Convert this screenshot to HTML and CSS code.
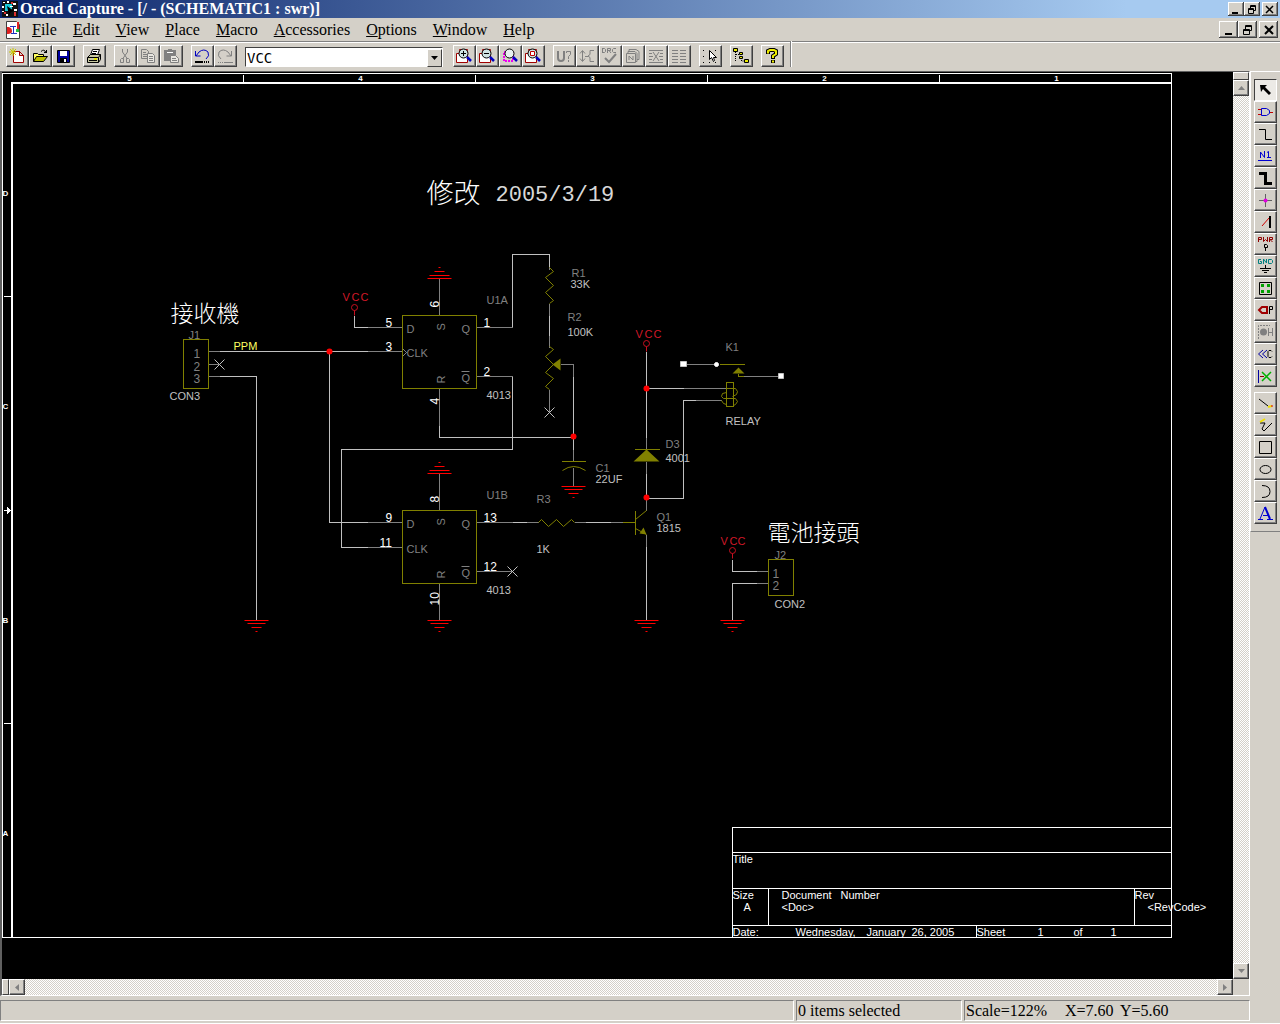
FILE: index.html
```html
<!DOCTYPE html>
<html lang="en">
<head>
<meta charset="utf-8">
<title>Orcad Capture</title>
<link rel="stylesheet" href="styles.css">
</head>
<body>
<div class="app">
  <header class="titlebar">
    <svg class="app-icon" width="16" height="16" viewBox="0 0 16 16"><path fill="#111" d="M0 0h16v16H0z"/><path fill="#18c8d8" d="M3 3h7v7H3z"/><path fill="#fff" d="M1 1h2v1H1zM5 0h2v2H5zM0 5h2v2H0zM0 10h2v1H0zM4 13h2v2H4zM11 2h3v2h-3zM8 5h3v1H8zM12 8h3v2h-3z"/><path fill="#e03030" d="M9 1h2v2H9zM2 11h2v2H2zM12 11h2v4h-2z"/><path d="M5 5l7 5-3 1-2 3z"/></svg>
    <h1>Orcad Capture - [/ - (SCHEMATIC1 : swr)]</h1>
    <div class="winbtns">
      <button class="win" aria-label="Minimize"><svg width="10" height="9" viewBox="0 0 10 9"><path fill="#000" d="M1 7h6v2H1z"/></svg></button>
      <button class="win" aria-label="Restore"><svg width="10" height="9" viewBox="0 0 10 9"><path fill="none" stroke="#000" d="M3.500 3V.500h5v5H7M3 1.500h6M1.500 3.500h5v5h-5zM1 4.500h6"/></svg></button>
      <button class="win close" aria-label="Close"><svg width="10" height="9" viewBox="0 0 10 9"><path stroke="#000" stroke-width="1.500" d="M1 1l7 7M8 1l-7 7"/></svg></button>
    </div>
  </header>

  <nav class="menubar">
    <svg class="doc-icon" width="15" height="18" viewBox="0 0 15 18"><path fill="#fff" stroke="#404040" d="M.500.500h10l3 3v14H.500z"/><path fill="#e02020" d="M1 6c4 0 5 2 5 4s-1 3-5 3zM11 1h2v7h-2z"/><path stroke="#2030c0" fill="none" d="M4 5.500h6M7.500 5v7M5 12.500h6"/><path fill="#20c040" d="M10 8h3v3h-3z"/></svg>
    <a href="#"><u>F</u>ile</a><a href="#"><u>E</u>dit</a><a href="#"><u>V</u>iew</a><a href="#"><u>P</u>lace</a><a href="#"><u>M</u>acro</a><a href="#"><u>A</u>ccessories</a><a href="#"><u>O</u>ptions</a><a href="#"><u>W</u>indow</a><a href="#"><u>H</u>elp</a>
    <div class="winbtns doc">
      <button class="win" aria-label="Minimize document"><svg width="10" height="10" viewBox="0 0 10 10"><path fill="#000" d="M1 8h7v2H1z"/></svg></button>
      <button class="win" aria-label="Restore document"><svg width="11" height="10" viewBox="0 0 11 10"><path fill="none" stroke="#000" d="M3.500 4V.500h6v5H8M3 1.500h7M1.500 4.500h6v5h-6zM1 5.500h7"/></svg></button>
      <button class="win close" aria-label="Close document"><svg width="10" height="10" viewBox="0 0 10 10"><path stroke="#000" stroke-width="2" d="M1 1l8 8M9 1l-8 8"/></svg></button>
    </div>
  </nav>

  <div class="toolbar">
    <div class="group">
      <button class="tb" aria-label="New"><svg viewBox="0 0 16 16"><path fill="#fff" stroke="#a00000" d="M4.500 3.500h6l4 4v7h-10zM10.500 3v4.500H15"/><path stroke="#c8c800" d="M1 1l6 6M7 1L1 7M4 0v8M0 4h7"/></svg></button>
      <button class="tb" aria-label="Open"><svg viewBox="0 0 16 16"><path fill="#ffff60" stroke="#000" d="M1.500 13.500v-8h4l1 1h5v2"/><path fill="#c0c000" stroke="#000" d="M1.500 13.500l3-5h11l-4 5z"/><path fill="none" stroke="#000" d="M9 3.500q3-3 5 1M12 4.500h3M14.500 2v3"/></svg></button>
      <button class="tb" aria-label="Save"><svg viewBox="0 0 16 16"><path fill="#0000a0" stroke="#000" d="M2.500 2.500h12v12h-12z"/><path fill="#fff" d="M5 3h7v5H5z"/><path fill="#000" d="M5 10h7v4H5z"/><path fill="#fff" d="M9 11h2v3H9z"/></svg></button>
    </div>
    <div class="group">
      <button class="tb" aria-label="Print"><svg viewBox="0 0 16 16"><path fill="#fff" stroke="#000" d="M4.500 7l2-5.500h7l-2 5.500"/><path stroke="#000" d="M7 3.500h4M6 5.500h4"/><path fill="#c8c8a0" stroke="#000" d="M1.500 9.500l3-3h10v5l-2 3h-11z"/><path fill="none" stroke="#000" d="M1.500 9.500h11v5M12.500 9.500l2-3M3 12.500h8"/><path fill="#e8e800" d="M8 10h3v2H8z"/></svg></button>
    </div>
    <div class="group">
      <button class="tb" aria-label="Cut" disabled><svg viewBox="0 0 16 16"><path class="dis" d="M5.500 1v3l5 7M10.500 1v3l-5 7M4.500 10.500h2v4h-3v-3zM9.500 10.500h2l1 1v3h-3z"/></svg></button>
      <button class="tb" aria-label="Copy" disabled><svg viewBox="0 0 16 16"><path class="dis" d="M1.500 1.500h5l2 2v7h-7zM3 4.500h3M3 6.500h4M3 8.500h4"/><path class="dis sheetfill" d="M7.500 5.500h5l2 2v7h-7zM9 8.500h4M9 10.500h4M9 12.500h4"/></svg></button>
      <button class="tb" aria-label="Paste" disabled><svg viewBox="0 0 16 16"><path fill="#808080" d="M1 2h4V1h4v1h4v11H1z"/><path stroke="#fff" d="M4 4.500h6"/><path class="dis sheetfill" d="M7.500 7.500h5l3 3v4h-8zM9 10.500h4M9 12.500h5"/></svg></button>
    </div>
    <div class="group">
      <button class="tb" aria-label="Undo"><svg viewBox="0 0 16 16"><path fill="none" stroke="#0000c0" d="M1.500 3v5h5M2 8l3-4q5-4 9 0 2 4-2 7"/><path stroke="#000" stroke-width="2" d="M1 14h8"/><path stroke="#000" stroke-dasharray="1 1" stroke-width="2" d="M10 14h6"/></svg></button>
      <button class="tb" aria-label="Redo" disabled><svg viewBox="0 0 16 16"><path class="dis" d="M14.500 3v5h-5M14 8l-3-4q-5-4-9 0-2 4 2 7"/><path stroke="#808080" stroke-dasharray="1 1" d="M1 14.500h7"/><path stroke="#808080" d="M8 14.500h8"/></svg></button>
    </div>
    <div class="combo">
      <select aria-label="Part"><option>VCC</option></select>
      <span class="drop"><svg width="7" height="4" viewBox="0 0 7 4"><path d="M0 0h7L3.500 4z"/></svg></span>
    </div>
    <div class="group">
      <button class="tb" aria-label="Zoom in"><svg viewBox="0 0 16 16"><path fill="#fff" stroke="#a00000" d="M.500 14.500v-9h3v-4h8v13z"/><circle cx="7.500" cy="5.500" r="4.500" fill="#cfe4e4" stroke="#000"/><path stroke="#000" d="M5 5.500h5M7.500 3v5"/><path stroke="#0000c0" stroke-width="2.500" d="M11 9l4 4"/></svg></button>
      <button class="tb" aria-label="Zoom out"><svg viewBox="0 0 16 16"><path fill="#fff" stroke="#a00000" d="M.500 14.500v-9h3v-4h8v13z"/><circle cx="7.500" cy="5.500" r="4.500" fill="#cfe4e4" stroke="#000"/><path stroke="#000" d="M5 5.500h5"/><path stroke="#0000c0" stroke-width="2.500" d="M11 9l4 4"/></svg></button>
      <button class="tb" aria-label="Zoom to region"><svg viewBox="0 0 16 16"><path fill="none" stroke="#f000f0" stroke-width="2" stroke-dasharray="2 1" d="M2 4h9v9H2z"/><circle cx="7.500" cy="5.500" r="4.500" fill="#e8f0f0" stroke="#000"/><path stroke="#0000c0" stroke-width="2.500" d="M11 9l4 4"/></svg></button>
      <button class="tb" aria-label="Zoom to all"><svg viewBox="0 0 16 16"><path fill="#fff" stroke="#a00000" d="M.500 14.500v-9h3v-4h8v13z"/><circle cx="7.500" cy="5.500" r="4.500" fill="#cfe4e4" stroke="#000"/><path fill="#fff" stroke="#c00000" d="M5.500 3.500h4v4h-4z"/><path stroke="#0000c0" stroke-width="2.500" d="M11 9l4 4"/></svg></button>
    </div>
    <div class="group">
      <button class="tb" aria-label="Annotate" disabled><svg viewBox="0 0 16 16"><path class="dis" stroke-width="2" d="M2 3v7q0 3 3 3t3-3V3"/><path class="dis" d="M10.500 5V3.500h4v3l-2 2V11M12.500 12v2"/></svg></button>
      <button class="tb" aria-label="Back annotate" disabled><svg viewBox="0 0 16 16"><path class="dis" d="M3.500 3v10M1 5.500l2.500-3L6 5.500M1 10.500l2.500 3 2.500-3M15 2.500h-4v4l-2 1.500 2 1.500v4h4M6 8.500h3"/></svg></button>
      <button class="tb" aria-label="Design rules check" disabled><svg viewBox="0 0 16 16"><path class="dis" d="M.500 0v5M0 .500h2.500l1 1v2l-1 1H0M5.500 5V.500h3v2h-3M7 2.500l2 2.500M14 .500h-2.500l-1 1v2l1 1H14"/><path class="dis" stroke-width="2" d="M3 10l4 4 7-8"/></svg></button>
      <button class="tb" aria-label="Create netlist" disabled><svg viewBox="0 0 16 16"><path class="dis" d="M4 3V1.500h7l3 2v8h-2M3 5V3.500h7l2 2v8h-2M1.500 5.500h9v9h-9zM4 12V8l4 4V8"/></svg></button>
      <button class="tb" aria-label="Cross reference" disabled><svg viewBox="0 0 16 16"><path class="dis" d="M1 2.500h14M1 5.500h3M12 5.500h3M1 8.500h4M11 8.500h4M1 11.500h3M12 11.500h3M1 14.500h14M5 4l6 9M11 4l-6 9"/></svg></button>
      <button class="tb" aria-label="Bill of materials" disabled><svg viewBox="0 0 16 16"><path class="dis" d="M1 2.500h6M9 2.500h6M1 5.500h6M9 5.500h6M1 8.500h6M9 8.500h6M1 11.500h6M9 11.500h6M1 14.500h6M9 14.500h6"/></svg></button>
    </div>
    <div class="group">
      <button class="tb" aria-label="Snap to grid"><svg viewBox="0 0 16 16"><path d="M1 2h1v1H1zM1 8h1v1H1zM1 14h1v1H1zM7 14h1v1H7zM13 2h1v1h-1zM13 14h1v1h-1z"/><path fill="#fff" stroke="#000" d="M7.500 2.500v9l2-2 2 4 1-1-1-3h3z"/></svg></button>
    </div>
    <div class="group">
      <button class="tb" aria-label="Project manager"><svg viewBox="0 0 16 16"><path fill="none" stroke="#000" stroke-dasharray="1 1" d="M2.500 4v10M3 6.500h4M8.500 8v5H12"/><path fill="#e8e800" stroke="#000" d="M.500.500h4v3h-4zM6.500 4.500h3v2h-3zM6.500 8.500h3v2h-3zM11.500 11.500h4v3h-4z"/></svg></button>
    </div>
    <div class="group">
      <button class="tb" aria-label="Help"><svg viewBox="0 0 16 16"><path fill="none" stroke="#000" stroke-width="4" d="M4 6V3l2-1h4l2 1v3L9 8v3M9 12v3"/><path fill="none" stroke="#f0f000" stroke-width="2" d="M4 5.500V3l2-1h4l2 1v3L9 8v2M9 12.500v2"/></svg></button>
    </div>
    <span class="tb-end"></span>
  </div>

  <div class="work">
    <main class="mdi">
      <div class="canvas">
        <svg class="sheet" width="1231" height="907" viewBox="1.500 71.500 1231 907">
          <defs>
            <g id="gnd"><path stroke="#f00" d="M-12 0h24M-9 3h18M-5 7h10M-1 11h2"/></g>
            <g id="gndup"><path stroke="#f00" d="M-12 0h24M-10-3h20M-5-7h10M-1-11h2"/></g>
            <g id="pwr"><circle cx="0" cy="-8" r="3"/><path d="M0-5v5"/></g>
            <path id="nc" d="M-5-5l10 10M5-5l-10 10"/>
          </defs>

          <g class="frame">
            <path d="M2 73h1169v864H2zM243 74v8M475 74v8M707 74v8M939 74v8M3 296h8M3 723h8M3 510h8"/>
            <path stroke-width="2" d="M1171 82.500H11.500V937"/>
            <path class="arrow" d="M6 506l5 4-5 4z"/>
            <path d="M732 937V827h439M732 852h439M732 888h439M732 925h439M768 888v37M1134 888v37M976 925v12"/>
          </g>
          <g class="ruler">
            <text x="129" y="80">5</text><text x="360" y="80">4</text><text x="592" y="80">3</text><text x="824" y="80">2</text><text x="1056" y="80">1</text>
            <text x="5" y="195">D</text><text x="5" y="408">C</text><text x="5" y="622">B</text><text x="5" y="835">A</text>
          </g>
          <g class="block">
            <text x="732" y="862">Title</text><text x="732" y="898">Size</text><text x="743" y="910">A</text>
            <text x="781" y="898">Document <tspan x="840">Number</tspan></text><text x="781" y="910">&lt;Doc&gt;</text>
            <text x="1134" y="898">Rev</text><text x="1147" y="910">&lt;RevCode&gt;</text>
            <text x="732" y="935">Date:</text><text x="795" y="935">Wednesday, <tspan x="866">January </tspan><tspan x="911">26, 2005</tspan></text>
            <text x="976" y="935">Sheet</text><text x="1037" y="935">1</text><text x="1073" y="935">of</text><text x="1110" y="935">1</text>
          </g>

          <g class="wire">
            <path d="M219 351h148M219 376h37v244M329 351v171h38M354 315v12h13M512 327V254h37v12M439 425v12h134M512 376v73H341v98h26M573 376v73M549 315v20M512 522h14M585 522h25M646 351v86M646 388h37M646 473v25h37V400h12M646 546v74M732 559v12h24M756 583h-24v37"/>
          </g>
          <g class="pin">
            <path d="M208 351h11M208 364h11M208 376h11M367 351h35M367 327h35M367 522h35M367 547h35M476 327h36M476 376h36M439 278v37M439 388v37M476 522h36M476 571h36M439 473v37M439 583v37M560 364h13v12M573 449v12M573 467v19M526 522h12M574 522h11M610 522h12M646 437v12M646 461v12M646 498v12M646 534v12M683 388h43M695 400h26M686 364h28M743 376h34M756 571h12M756 583h12M549 266v3M549 303v12M549 335v12M549 389v23"/>
            <path d="M402 348l4 4-4 4"/>
          </g>
          <g class="cross"><use href="#nc" x="219" y="364"/><use href="#nc" x="549" y="412"/><use href="#nc" x="512" y="571"/></g>
          <g class="part">
            <path class="crisp" d="M183 339h25v49h-25zM402 315h74v73h-74zM402 510h74v73h-74zM768 559h25v36h-25zM726 382h7v24h-7zM561 461h24M634 449h25M635 510v24M622 522h13M719 364h25M738 373v3h5"/>
            <path d="M549 267l4 4-8 6 8 8-8 7 8 8-4 3M549 346l4 3-8 7 8 8-8 8 8 6-8 8 4 3M538 522l3-3 7 7 8-7 7 7 8-7 3 3M562 470q11-8 23 0M635 519l11-9M635 528l11 6"/>
            <path d="M726 388h9l2 3-1 3-4 2M733 398h-10l-2-2 1-3 4-1M733 398h2l2 3-2 3-2 1M726 404l-3-1-2-3"/>
            <path class="solid" d="M552 364l8-6v12zM646 449l13 12h-26zM738 367l6 6h-12zM643 527l3 7-7-1z"/>
          </g>
          <use href="#gndup" x="439" y="278"/><use href="#gndup" x="439" y="473"/>
          <use href="#gnd" x="256" y="620"/><use href="#gnd" x="439" y="620"/><use href="#gnd" x="573" y="486"/><use href="#gnd" x="646" y="620"/><use href="#gnd" x="732" y="620"/>
          <g class="power"><use href="#pwr" x="354" y="315"/><use href="#pwr" x="646" y="351"/><use href="#pwr" x="732" y="558"/></g>
          <g class="junction"><circle cx="329" cy="351" r="3"/><circle cx="573" cy="436" r="3"/><circle cx="646" cy="388" r="3"/><circle cx="646" cy="497" r="3"/></g>
          <g class="handle"><path d="M680 361h6v5h-6zM778 373h5v5h-5z"/><circle cx="716" cy="364" r="2"/></g>

          <g class="note">
            <text x="426" y="202" class="big">修改</text><text x="495" y="200" class="mono">2005/3/19</text>
            <text x="170" y="321">接收機</text><text x="767" y="540">電池接頭</text>
          </g>
          <g class="power-name"><text x="342" y="300">V<tspan x="351">C</tspan><tspan x="360">C</tspan></text><text x="635" y="337">V<tspan x="644">C</tspan><tspan x="653">C</tspan></text><text x="720" y="544">V<tspan x="729">C</tspan><tspan x="737">C</tspan></text></g>
          <text class="net" x="233" y="349">PPM</text>
          <g class="ref">
            <text x="188" y="338">J1</text><text x="486" y="303">U1A</text><text x="486" y="498">U1B</text><text x="571" y="276">R1</text><text x="567" y="320">R2</text><text x="595" y="471">C1</text><text x="536" y="502">R3</text><text x="656" y="520">Q1</text><text x="665" y="447">D3</text><text x="725" y="350">K1</text><text x="774" y="558">J2</text>
            <text x="406" y="332">D</text><text x="461" y="332">Q</text><text x="406" y="356">CLK</text><text x="461" y="381">Q</text>
            <text x="406" y="527">D</text><text x="461" y="527">Q</text><text x="406" y="552">CLK</text><text x="461" y="576">Q</text>
            <text transform="translate(444 330) rotate(-90)">S</text><text transform="translate(444 383) rotate(-90)">R</text>
            <text transform="translate(444 525) rotate(-90)">S</text><text transform="translate(444 578) rotate(-90)">R</text>
            <path d="M461 371h8M461 566h8"/>
          </g>
          <g class="ref num"><text x="193" y="357">1</text><text x="193" y="370">2</text><text x="193" y="382">3</text><text x="772" y="577">1</text><text x="772" y="589">2</text></g>
          <g class="value">
            <text x="169" y="399">CON3</text><text x="486" y="398">4013</text><text x="486" y="593">4013</text><text x="570" y="287">33K</text><text x="567" y="335">100K</text><text x="595" y="482">22UF</text><text x="536" y="552">1K</text><text x="656" y="531">1815</text><text x="665" y="461">4001</text><text x="725" y="424">RELAY</text><text x="774" y="607">CON2</text>
          </g>
          <g class="pinno">
            <text x="385" y="326">5</text><text x="385" y="350">3</text><text x="483" y="326">1</text><text x="483" y="375">2</text><text x="385" y="521">9</text><text x="379" y="546">11</text><text x="483" y="521">13</text><text x="483" y="570">12</text>
            <text transform="translate(438 307) rotate(-90)">6</text><text transform="translate(438 404) rotate(-90)">4</text><text transform="translate(438 502) rotate(-90)">8</text><text transform="translate(438 605) rotate(-90)">10</text>
          </g>
        </svg>
      </div>
      <div class="vscroll">
        <span class="split"></span>
        <button class="sb" aria-label="Scroll up"><svg width="7" height="4" viewBox="0 0 7 4"><path fill="#808080" d="M3.500 0L7 4H0z"/></svg></button>
        <span class="track"></span>
        <button class="sb" aria-label="Scroll down"><svg width="7" height="4" viewBox="0 0 7 4"><path fill="#808080" d="M0 0h7L3.500 4z"/></svg></button>
      </div>
      <div class="hscroll">
        <span class="split"></span>
        <button class="sb" aria-label="Scroll left"><svg width="4" height="7" viewBox="0 0 4 7"><path fill="#808080" d="M4 0v7L0 3.500z"/></svg></button>
        <span class="track"></span>
        <button class="sb" aria-label="Scroll right"><svg width="4" height="7" viewBox="0 0 4 7"><path fill="#808080" d="M0 0l4 3.500L0 7z"/></svg></button>
      </div>
      <span class="corner"></span>
    </main>
    <aside class="palette">
      <div class="tools">
        <button class="tb on" aria-label="Select"><svg viewBox="0 0 16 16"><path d="M3 3h7L8 5l6 6-2 2-6-6-2 3z"/></svg></button>
        <button class="tb" aria-label="Part"><svg viewBox="0 0 16 16"><path stroke="#c00000" d="M1 5.500h4M1 10.500h4M13 8.500h3"/><path fill="none" stroke="#0000d0" d="M4.500 4.500h5l3 2v3l-3 2h-5z"/></svg></button>
        <button class="tb" aria-label="Wire"><svg viewBox="0 0 16 16"><path fill="none" stroke="#000" d="M2 3.500h6.500v10H15"/></svg></button>
        <button class="tb" aria-label="Net alias"><svg viewBox="0 0 16 16"><path fill="none" stroke="#0000d0" d="M3.500 10V4l4 5.500V3M10 4.500l1.500-1V10M10 9.500h4"/><path stroke="#0000d0" d="M1 12.500h14"/></svg></button>
        <button class="tb" aria-label="Bus"><svg viewBox="0 0 16 16"><path fill="none" stroke="#000" stroke-width="3" d="M2 3.500h6.500v10H15"/></svg></button>
        <button class="tb" aria-label="Junction"><svg viewBox="0 0 16 16"><path stroke="#606060" d="M2 8.500h13M8.500 2v13"/><circle cx="8.500" cy="8.500" r="2" fill="#e000e0"/></svg></button>
        <button class="tb" aria-label="Bus entry"><svg viewBox="0 0 16 16"><path stroke="#d00000" d="M5 12l7-8"/><path stroke="#000" stroke-width="2" d="M13 2v12"/></svg></button>
        <button class="tb" aria-label="Power"><svg viewBox="0 0 16 16"><path fill="none" stroke="#900000" d="M1.500 6V1.500h3v2h-3M6.500 1v4.500l2-2 2 2V1M12.500 6V1.500h3v2h-3M13 3.500l2.500 2.500"/><path fill="none" stroke="#000" d="M7.500 8.500h2l1 1v2h-3zM8.500 12v3"/></svg></button>
        <button class="tb" aria-label="Ground"><svg viewBox="0 0 16 16"><path fill="none" stroke="#008080" d="M4 1.500H1.500v4h3v-2H3M6.500 6V1l3 4V1M11.500 1.500h3l1 1v2l-1 1h-3z"/><path stroke="#000" d="M8.500 7v3M3 10.500h11M5 12.500h7M7 14.500h3"/></svg></button>
        <button class="tb" aria-label="Hierarchical block"><svg viewBox="0 0 16 16"><path fill="none" stroke="#000" d="M2.500 2.500h12v12h-12z"/><path fill="#00a000" d="M4 4h3v3H4zM10 4h3v3h-3zM4 10h3v3H4zM10 10h3v3h-3z"/></svg></button>
        <button class="tb" aria-label="Port"><svg viewBox="0 0 16 16"><path fill="none" stroke="#a00000" stroke-width="2" d="M10 5H5L2 8l3 3h5z"/><path fill="none" stroke="#000" d="M12.500 12V4.500h3v3h-3"/></svg></button>
        <button class="tb" aria-label="Hierarchical pin" disabled><svg viewBox="0 0 16 16"><path class="dis" stroke-dasharray="2 1" d="M1.500 15V1.500H13"/><circle cx="6.500" cy="8" r="3.500" fill="#808080"/><path class="dis" d="M11.500 4v8M15.500 4v8M12 8.500h3"/></svg></button>
        <button class="tb" aria-label="Off-page connector"><svg viewBox="0 0 16 16"><path fill="none" stroke="#0000a0" d="M6 4L1.500 8 6 12M10 4L5.500 8l4.500 4"/><path fill="none" stroke="#000" d="M15 5.500l-1-1h-2l-1 1v5l1 1h2l1-1"/></svg></button>
        <button class="tb" aria-label="No connect"><svg viewBox="0 0 16 16"><path stroke="#0000a0" d="M1.500 2v13"/><path stroke="#900000" d="M3 8.500h4"/><path stroke="#00b000" stroke-width="1.500" d="M5 4l9 9M14 4l-9 9"/></svg></button>
      </div>
      <div class="tools">
        <button class="tb" aria-label="Line"><svg viewBox="0 0 16 16"><path stroke="#000" d="M2 4l9 7"/><path stroke="#f0e000" stroke-width="2" d="M11 12l4-1"/><path stroke="#e00000" d="M15 10v2"/></svg></button>
        <button class="tb" aria-label="Polyline"><svg viewBox="0 0 16 16"><path fill="none" stroke="#000" d="M3 6l5 0-3 6 2 2 8-8"/><path stroke="#f0e000" stroke-width="2" d="M3 5l5-3"/></svg></button>
        <button class="tb" aria-label="Rectangle"><svg viewBox="0 0 16 16"><path fill="none" stroke="#000" d="M2.500 2.500h12v12h-12z"/></svg></button>
        <button class="tb" aria-label="Ellipse"><svg viewBox="0 0 16 16"><ellipse cx="8.500" cy="8.500" rx="5.500" ry="4" fill="none" stroke="#000"/></svg></button>
        <button class="tb" aria-label="Arc"><svg viewBox="0 0 16 16"><path fill="none" stroke="#000" d="M5 2.500q8 0 8 6t-8 6"/></svg></button>
        <button class="tb" aria-label="Text"><svg viewBox="0 0 16 16"><path fill="none" stroke="#0000d0" d="M1 14.500h5M10 14.500h6M3 14L8 2M6 10.500h5"/><path stroke="#0000d0" stroke-width="2" d="M8 2l5 12"/></svg></button>
      </div>
    </aside>
  </div>

  <footer class="status">
    <span class="pane grow"></span>
    <span class="pane items">0 items selected</span>
    <span class="pane scale"><span>Scale=122%</span><span>X=7.60</span><span>Y=5.60</span></span>
  </footer>
</div>
</body>
</html>
```
FILE: styles.css
```css
* { box-sizing: border-box; }
body { margin: 0; background: #fff; font: 16px/18px "Liberation Serif", "Noto Sans CJK TC", serif; color: #000; }
button { padding: 0; margin: 0; border: 0; color: #000; display: flex; align-items: center; justify-content: center; flex: none; }
.app { display: flex; flex-direction: column; height: 100vh; background: #d4d0c8; border-bottom: 1px solid #fff; }

.titlebar { display: flex; align-items: center; height: 18px; padding: 0 2px; background: linear-gradient(90deg, #0a246a, #a6caf0 88%); color: #fff; }
.titlebar h1 { margin: 0 auto 0 2px; font-size: 16px; line-height: 18px; font-weight: bold; white-space: pre; }
.winbtns { display: flex; margin-left: auto; }
.win { width: 16px; height: 14px; background: #d4d0c8; box-shadow: inset -1px -1px #404040, inset 1px 1px #fff, inset -2px -2px #808080; }
.win.close { margin-left: 2px; }
.doc .win { width: 19px; height: 17px; }

.menubar { display: flex; align-items: center; height: 24px; padding: 0 2px 0 6px; border-bottom: 1px solid #808080; }
.menubar a { color: #000; text-decoration: none; margin-right: 16px; line-height: 22px; }
.doc-icon { margin-right: 11px; }

.toolbar { display: flex; align-items: flex-end; gap: 8px; height: 29px; padding: 0 0 3px 6px; border-top: 1px solid #fff; border-bottom: 1px solid #d4d0c8; }
.group { display: flex; }
.tb { width: 23px; height: 22px; padding-right: 1px; background: #d4d0c8; border: 1px solid; border-color: #fff #404040 #404040 #fff; box-shadow: inset -1px -1px #808080; }
.tb svg { width: 16px; height: 16px; }
.tb.on { border-color: #404040 #fff #fff #404040; background: #eceae6; box-shadow: none; }
.dis { fill: none; stroke: #808080; }
.sheetfill { fill: #e8e6e0; }
.combo { position: relative; width: 198px; height: 20px; margin-right: 2px; }
.combo select { appearance: none; width: 100%; height: 100%; margin: 0; padding: 2px 0 0 1px; background: #fff; color: #000; border: 1px solid; border-color: #404040 #fff #fff #404040; border-radius: 0; font: 14px/16px "DejaVu Sans Mono", monospace; }
.drop { position: absolute; right: 1px; top: 2px; bottom: 0; width: 15px; display: flex; align-items: center; justify-content: center; background: #d4d0c8; border: 1px solid; border-color: #fff #404040 #404040 #fff; pointer-events: none; }
.tb-end { width: 2px; height: 26px; margin-left: -2px; border-left: 1px solid #808080; border-right: 1px solid #fff; }

.work { display: flex; flex: 1; min-height: 0; }
.mdi { flex: 1; min-width: 0; display: grid; grid-template: minmax(0, 1fr) 16px / minmax(0, 1fr) 16px; border: 1px solid #fff; border-width: 1px 1px 1px 2px; border-top-color: #606060; border-left-color: #606060; }
.canvas { background: #000; overflow: hidden; }
.vscroll, .hscroll { display: flex; }
.vscroll { flex-direction: column; }
.split { flex: none; background: #d4d0c8; border: 1px solid; border-color: #fff #404040 #404040 #fff; }
.vscroll .split { height: 8px; }
.hscroll .split { width: 7px; }
.sb { width: 16px; height: 16px; background: #d4d0c8; border: 1px solid; border-color: #fff #404040 #404040 #fff; box-shadow: inset -1px -1px #808080; }
.track { flex: 1; background: repeating-conic-gradient(#fff 0 25%, #d4d0c8 0 50%) 0 0 / 2px 2px; }
.corner { background: #d4d0c8; }

.palette { flex: none; width: 30px; align-self: flex-start; border-top: 1px solid #fff; border-bottom: 1px solid #808080; border-left: 1px solid #fff; padding: 7px 3px; display: flex; flex-direction: column; gap: 5px; }

.status { display: flex; gap: 2px; height: 27px; padding: 4px 30px 2px 0; }
.pane { border: 1px solid; border-color: #808080 #fff #fff #808080; padding-left: 1px; line-height: 20px; white-space: nowrap; }
.grow { flex: 1; }
.items { width: 166px; }
.scale { width: 286px; display: flex; }
.scale span:nth-child(1) { width: 99px; }
.scale span:nth-child(2) { width: 55px; }

.sheet { display: block; font: 11px "Liberation Sans", sans-serif; }
.sheet path { fill: none; }
.frame path, .wire path, .pin path, .crisp { shape-rendering: crispEdges; }
.frame path { stroke: #fff; }
.sheet .arrow { fill: #fff; stroke: none; }
.ruler { fill: #fff; font-size: 8px; font-weight: bold; text-anchor: middle; }
.block { fill: #fff; }
.wire { stroke: #c0c0c0; }
.pin { stroke: #808080; }
.cross { stroke: #c0c0c0; }
.part { stroke: #808000; }
.sheet .solid { fill: #808000; stroke: none; }
.power { stroke: #c81020; fill: none; }
.junction { fill: #f00; }
.sheet .handle path { fill: #fff; stroke: #c0c0c0; }
.handle { fill: #fff; stroke: #fff; }
.note { fill: #fff; font: 300 23px "Noto Sans CJK TC", sans-serif; }
.big { font-size: 27px; }
.mono { fill: #d8d8d8; font: 22px "Liberation Mono", monospace; }
.power-name { fill: #d01828; }
.net { fill: #ffff60; }
.ref { fill: #808080; }
.ref path { stroke: #808080; }
.ref.num { font-size: 12px; }
.value { fill: #c0c0c0; }
.pinno { fill: #fff; font-size: 12px; }
```
